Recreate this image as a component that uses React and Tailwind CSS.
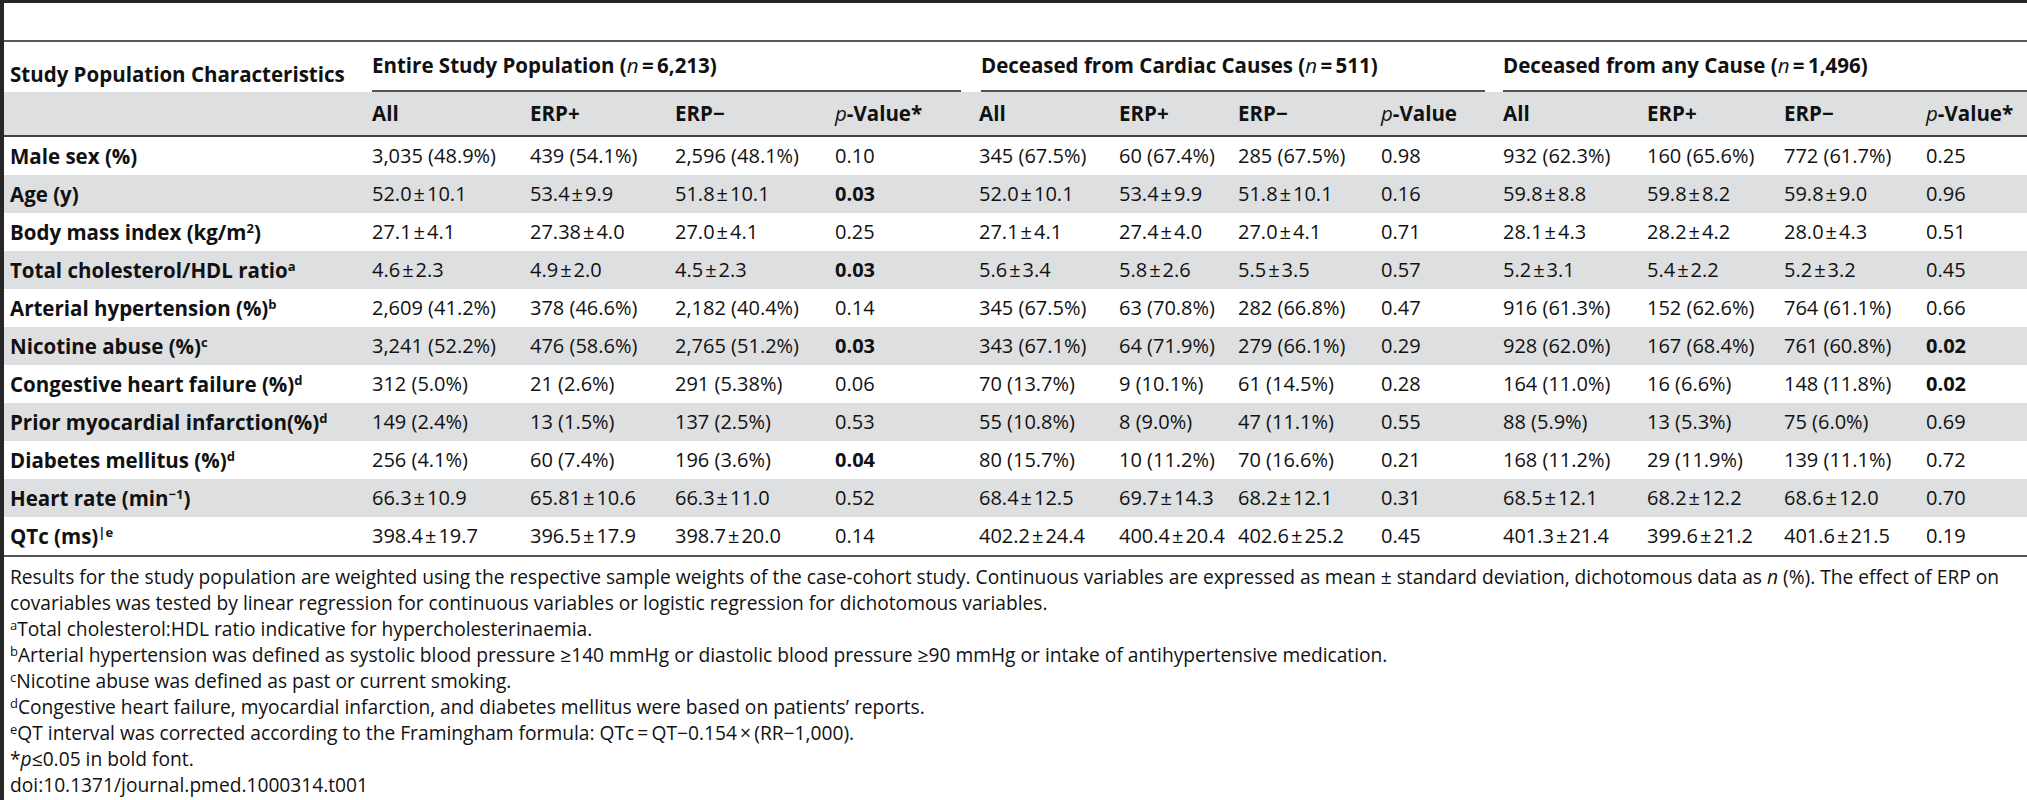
import React from "react";

const COLS = "grid grid-cols-[368px_158px_145px_160px_144px_140px_119px_143px_122px_144px_137px_142px_101px]";

const pm = (s) => s.replace("±", "\u200A±\u200A");

const rows = [
  { label: <>Male sex (%)</>, v: ["3,035 (48.9%)", "439 (54.1%)", "2,596 (48.1%)", "0.10", "345 (67.5%)", "60 (67.4%)", "285 (67.5%)", "0.98", "932 (62.3%)", "160 (65.6%)", "772 (61.7%)", "0.25"], b: [] },
  { label: <>Age (y)</>, v: ["52.0±10.1", "53.4±9.9", "51.8±10.1", "0.03", "52.0±10.1", "53.4±9.9", "51.8±10.1", "0.16", "59.8±8.8", "59.8±8.2", "59.8±9.0", "0.96"], b: [3] },
  { label: <>Body mass index (kg/m<sup className="text-[13px]">2</sup>)</>, v: ["27.1±4.1", "27.38±4.0", "27.0±4.1", "0.25", "27.1±4.1", "27.4±4.0", "27.0±4.1", "0.71", "28.1±4.3", "28.2±4.2", "28.0±4.3", "0.51"], b: [] },
  { label: <>Total cholesterol/HDL ratio<sup className="text-[13px]">a</sup></>, v: ["4.6±2.3", "4.9±2.0", "4.5±2.3", "0.03", "5.6±3.4", "5.8±2.6", "5.5±3.5", "0.57", "5.2±3.1", "5.4±2.2", "5.2±3.2", "0.45"], b: [3] },
  { label: <>Arterial hypertension (%)<sup className="text-[13px]">b</sup></>, v: ["2,609 (41.2%)", "378 (46.6%)", "2,182 (40.4%)", "0.14", "345 (67.5%)", "63 (70.8%)", "282 (66.8%)", "0.47", "916 (61.3%)", "152 (62.6%)", "764 (61.1%)", "0.66"], b: [] },
  { label: <>Nicotine abuse (%)<sup className="text-[13px]">c</sup></>, v: ["3,241 (52.2%)", "476 (58.6%)", "2,765 (51.2%)", "0.03", "343 (67.1%)", "64 (71.9%)", "279 (66.1%)", "0.29", "928 (62.0%)", "167 (68.4%)", "761 (60.8%)", "0.02"], b: [3, 11] },
  { label: <>Congestive heart failure (%)<sup className="text-[13px]">d</sup></>, v: ["312 (5.0%)", "21 (2.6%)", "291 (5.38%)", "0.06", "70 (13.7%)", "9 (10.1%)", "61 (14.5%)", "0.28", "164 (11.0%)", "16 (6.6%)", "148 (11.8%)", "0.02"], b: [11] },
  { label: <>Prior myocardial infarction(%)<sup className="text-[13px]">d</sup></>, v: ["149 (2.4%)", "13 (1.5%)", "137 (2.5%)", "0.53", "55 (10.8%)", "8 (9.0%)", "47 (11.1%)", "0.55", "88 (5.9%)", "13 (5.3%)", "75 (6.0%)", "0.69"], b: [] },
  { label: <>Diabetes mellitus (%)<sup className="text-[13px]">d</sup></>, v: ["256 (4.1%)", "60 (7.4%)", "196 (3.6%)", "0.04", "80 (15.7%)", "10 (11.2%)", "70 (16.6%)", "0.21", "168 (11.2%)", "29 (11.9%)", "139 (11.1%)", "0.72"], b: [3] },
  { label: <>Heart rate (min<sup className="text-[13px]">−1</sup>)</>, v: ["66.3±10.9", "65.81±10.6", "66.3±11.0", "0.52", "68.4±12.5", "69.7±14.3", "68.2±12.1", "0.31", "68.5±12.1", "68.2±12.2", "68.6±12.0", "0.70"], b: [] },
  { label: <>QTc (ms)<sup className="text-[13px]">|e</sup></>, v: ["398.4±19.7", "396.5±17.9", "398.7±20.0", "0.14", "402.2±24.4", "400.4±20.4", "402.6±25.2", "0.45", "401.3±21.4", "399.6±21.2", "401.6±21.5", "0.19"], b: [] },
];

const sub = ["All", "ERP+", "ERP−", "pv*", "All", "ERP+", "ERP−", "pv", "All", "ERP+", "ERP−", "pv*"];

function Sup({ children }) {
  return <sup className="text-[13px]">{children}</sup>;
}

export default function App() {
  return (
    <div className="w-[2027px] h-[800px] overflow-hidden bg-white border-t-[3px] border-l-4 border-[#262626] font-['Open_Sans',sans-serif] text-[#111]">
      <div className="h-[37px]" />
      <div className="h-[2px] bg-[#5a5a5a]" />
      {/* header row 1 */}
      <div className={`${COLS} h-[50px] text-[20.5px] font-bold`}>
        <div className="pl-[6px] pt-[19px] leading-[26px] whitespace-nowrap">Study Population Characteristics</div>
        <div className="col-span-4 mr-[18px] border-b-2 border-[#555] pt-[10px] leading-[26px] whitespace-nowrap">
          Entire Study Population (<span className="italic font-normal">n</span>{"\u2009=\u2009"}6,213)
        </div>
        <div className="col-span-4 mr-[18px] ml-[2px] border-b-2 border-[#555] pt-[10px] leading-[26px] whitespace-nowrap">
          Deceased from Cardiac Causes (<span className="italic font-normal">n</span>{"\u2009=\u2009"}511)
        </div>
        <div className="col-span-4 border-b-2 border-[#555] pt-[10px] leading-[26px] whitespace-nowrap">
          Deceased from any Cause (<span className="italic font-normal">n</span>{"\u2009=\u2009"}1,496)
        </div>
      </div>
      {/* header row 2 */}
      <div className={`${COLS} h-[43px] bg-[#dedfe0] text-[20.5px] font-bold items-center`}>
        <div />
        {sub.map((s, i) => (
          <div key={i} className="whitespace-nowrap">
            {s.startsWith("pv") ? (
              <>
                <span className="italic font-normal">p</span>-Value{s.endsWith("*") ? "*" : ""}
              </>
            ) : (
              s
            )}
          </div>
        ))}
      </div>
      <div className="h-[2px] bg-[#444]" />
      {rows.map((r, ri) => (
        <div key={ri} className={`${COLS} h-[38px] items-center text-[20px] ${ri % 2 === 1 ? "bg-[#dedfe0]" : ""}`}>
          <div className="pl-[6px] font-bold text-[20.5px] whitespace-nowrap">{r.label}</div>
          {r.v.map((v, i) => (
            <div key={i} className={`whitespace-nowrap ${r.b.includes(i) ? "font-bold" : ""}`}>{pm(v)}</div>
          ))}
        </div>
      ))}
      <div className="h-[2px] bg-[#555]" />
      <div className="pt-[7px] pl-[6px] text-[19.2px] leading-[26px] whitespace-nowrap">
        <div>
          Results for the study population are weighted using the respective sample weights of the case-cohort study. Continuous variables are expressed as mean {"±"} standard deviation, dichotomous data as <span className="italic">n</span> (%). The effect of ERP on
        </div>
        <div>covariables was tested by linear regression for continuous variables or logistic regression for dichotomous variables.</div>
        <div><Sup>a</Sup>Total cholesterol:HDL ratio indicative for hypercholesterinaemia.</div>
        <div><Sup>b</Sup>Arterial hypertension was defined as systolic blood pressure ≥140 mmHg or diastolic blood pressure ≥90 mmHg or intake of antihypertensive medication.</div>
        <div><Sup>c</Sup>Nicotine abuse was defined as past or current smoking.</div>
        <div><Sup>d</Sup>Congestive heart failure, myocardial infarction, and diabetes mellitus were based on patients’ reports.</div>
        <div><Sup>e</Sup>QT interval was corrected according to the Framingham formula: QTc{"\u2009=\u2009"}QT−0.154{"\u2009×\u2009"}(RR−1,000).</div>
        <div>*<span className="italic">p</span>≤0.05 in bold font.</div>
        <div>doi:10.1371/journal.pmed.1000314.t001</div>
      </div>
    </div>
  );
}
